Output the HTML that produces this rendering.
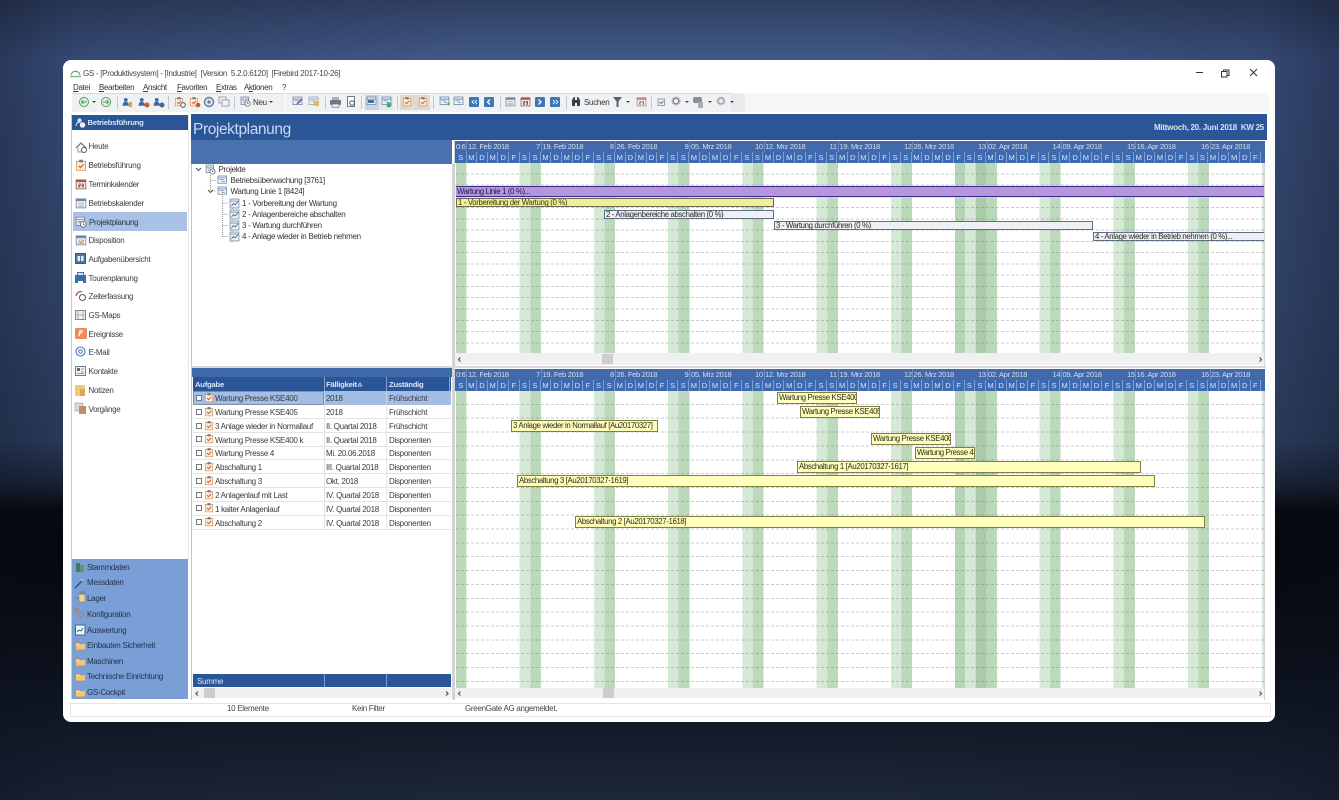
<!DOCTYPE html>
<html lang="de"><head><meta charset="utf-8"><title>GS - Projektplanung</title>
<style>
html,body{margin:0;padding:0;width:1339px;height:800px;overflow:hidden}
body{position:relative;font-family:"Liberation Sans",sans-serif;font-size:8px;letter-spacing:-.29px;color:#333;
background:linear-gradient(90deg,rgba(10,15,30,.42),rgba(10,15,30,.2) 6%,transparent 35%,transparent 65%,rgba(10,15,30,.2) 94%,rgba(10,15,30,.42)),linear-gradient(180deg,#2f3f5f 0,#41588a 60px,#3a5079 300px,#33466a 440px,#1c2738 485px,#05070a 510px,#04060a 560px,#0d131d 680px,#1c2739 800px)}
#app{position:absolute;left:0;top:0;width:1339px;height:800px;filter:blur(.3px)}
#w{position:absolute;left:63px;top:60px;width:1212px;height:662px;background:#fff;border-radius:8px}
.a{position:absolute}
.t{position:absolute;white-space:nowrap;line-height:12px;height:12px;margin-top:.7px}
.b{background:#2a5597}
.hdr{position:absolute;height:22px;left:455px;width:810px;background:#4269a9;overflow:hidden}
.hdr span{position:absolute;top:0;line-height:11px;color:#d3def0;font-size:7.6px;letter-spacing:-.33px;white-space:nowrap}
.hdr u{position:absolute;top:0;width:1px;height:11px;background:#6a8cc0}
.days{position:absolute;left:1px;top:11px;height:11px;width:809px;background:#3d6ab0;display:flex}
.days i{display:block;flex:0 0 10.607px;box-sizing:border-box;border-right:1px solid #7d9fd0;font-style:normal;text-align:center;line-height:11px;color:#d8e4f6;font-size:7.5px;letter-spacing:0}
.grid{position:absolute;left:456px;width:808px;background:repeating-linear-gradient(90deg,#bcd9bc 0 10.6px,#fff 10.6px 63.64px,#d6e8d6 63.64px 74.25px)}
.lines{position:absolute;left:0;top:0;right:0;bottom:0;-webkit-mask-image:repeating-linear-gradient(90deg,#000 0 3px,transparent 3px 5px);mask-image:repeating-linear-gradient(90deg,#000 0 3px,transparent 3px 5px)}
.e{position:absolute;width:10.6px;top:0;bottom:0}
.bar{position:absolute;box-sizing:border-box;white-space:nowrap;overflow:hidden;line-height:9px;padding-left:1px;font-size:7.8px;letter-spacing:-.35px;color:#2a2a20}
.y{background:#ffffbb;border:1px solid #7f7f45;height:12px;line-height:10px}
.g{background:#eef0f6;border:1px solid #5f6f82}
.scr{position:absolute;background:#f0f0f0}
.row{position:absolute;left:193px;width:258px;height:14px;border-bottom:1px solid #e3e3e3;box-sizing:border-box}
.row b{position:absolute;top:0;bottom:0;width:1px;background:#e3e3e3}
.cell{position:absolute;top:1px;margin-top:.5px;line-height:12px;white-space:nowrap;color:#3a3a3a}
.side{color:#3d3d3d}.low{color:#23324d}
.hb{color:#d9e5f6;font-weight:bold;font-size:7.7px;letter-spacing:-.25px}
.m{color:#333;letter-spacing:-.35px}
.sep{position:absolute;top:96px;width:1px;height:13px;background:#c4c8cf}
.ar{position:absolute;top:101px;width:0;height:0;border-left:2px solid transparent;border-right:2px solid transparent;border-top:2.5px solid #444}
</style></head><body>
<div id="app">
<div id="w"></div>

<!-- title + menu -->
<div class="t" style="left:83px;top:67px;color:#444">GS - [Produktivsystem] - [Industrie]&nbsp; [Version&nbsp; 5.2.0.6120]&nbsp; [Firebird 2017-10-26]</div>
<div class="t m" style="left:73px;top:81px"><u>D</u>atei</div>
<div class="t m" style="left:99px;top:81px"><u>B</u>earbeiten</div>
<div class="t m" style="left:143px;top:81px"><u>A</u>nsicht</div>
<div class="t m" style="left:177px;top:81px"><u>F</u>avoriten</div>
<div class="t m" style="left:216px;top:81px"><u>E</u>xtras</div>
<div class="t m" style="left:244px;top:81px">A<u>k</u>tionen</div>
<div class="t m" style="left:282px;top:81px">?</div>

<!-- toolbar -->
<div class="a" style="left:72px;top:93px;width:1197px;height:19px;background:#f5f6f7"></div>
<div class="a" style="left:72px;top:93px;width:673px;height:19px;background:#f0f1f3"></div>
<div class="a" style="left:72px;top:93px;width:213px;height:1px;background:#d5d8de"></div>
<div class="a" style="left:286px;top:93px;width:445px;height:1px;background:#d5d8de"></div>
<div class="a" style="left:285px;top:93px;width:1px;height:19px;background:#fff"></div>
<div class="a" style="left:731px;top:94px;width:14px;height:18px;background:#e9eaec"></div>
<div class="a" style="left:365px;top:95px;width:14px;height:15px;background:#cad5e4"></div>
<div class="a" style="left:379px;top:95px;width:14px;height:15px;background:#e4e8ee"></div>
<div class="a" style="left:400px;top:95px;width:30px;height:15px;background:#e0d9cf"></div>
<div class="sep" style="left:117px"></div><div class="sep" style="left:168px"></div><div class="sep" style="left:234px"></div>
<div class="sep" style="left:325px"></div><div class="sep" style="left:361px"></div><div class="sep" style="left:397px"></div><div class="sep" style="left:433px"></div><div class="sep" style="left:500px"></div><div class="sep" style="left:566px"></div><div class="sep" style="left:651px"></div>
<div class="ar" style="left:92px"></div><div class="ar" style="left:269px"></div><div class="ar" style="left:626px"></div><div class="ar" style="left:685px"></div><div class="ar" style="left:708px"></div><div class="ar" style="left:730px"></div>
<div class="t" style="left:253px;top:96px;color:#333">Neu</div>
<div class="t" style="left:584px;top:96px;color:#333">Suchen</div>

<!-- top blue header -->
<div class="a b" style="left:191px;top:114px;width:1076px;height:26px"></div>
<div class="t" style="left:193px;top:120px;height:17px;line-height:17px;font-size:15.5px;letter-spacing:-.4px;color:#c9dbf2">Projektplanung</div>
<div class="t" style="right:75px;top:121px;color:#d6e2f3;font-weight:bold;letter-spacing:-.26px">Mittwoch, 20. Juni 2018&nbsp; KW 25</div>

<!-- sidebar -->
<div class="a" style="left:71px;top:114px;width:1px;height:585px;background:#c9c9c9"></div>
<div class="a" style="left:188px;top:114px;width:1px;height:445px;background:#e6e6e6"></div>
<div class="a b" style="left:72px;top:115px;width:116px;height:15px"></div>
<div class="t hb" style="left:87.5px;top:116.5px">Betriebsführung</div>
<div class="a" style="left:73px;top:212px;width:114px;height:19px;background:#a9c1e4"></div>
<div class="t side" style="left:88.5px;top:140.5px">Heute</div>
<div class="t side" style="left:88.5px;top:159px">Betriebsführung</div>
<div class="t side" style="left:88.5px;top:178px">Terminkalender</div>
<div class="t side" style="left:88.5px;top:197px">Betriebskalender</div>
<div class="t" style="left:89px;top:216px;color:#26344c">Projektplanung</div>
<div class="t side" style="left:88.5px;top:234.5px">Disposition</div>
<div class="t side" style="left:88.5px;top:253px">Aufgabenübersicht</div>
<div class="t side" style="left:88.5px;top:272px">Tourenplanung</div>
<div class="t side" style="left:88.5px;top:290.5px">Zeiterfassung</div>
<div class="t side" style="left:88.5px;top:309px">GS-Maps</div>
<div class="t side" style="left:88.5px;top:328px">Ereignisse</div>
<div class="t side" style="left:88.5px;top:346.5px">E-Mail</div>
<div class="t side" style="left:88.5px;top:365px">Kontakte</div>
<div class="t side" style="left:88.5px;top:384px">Notizen</div>
<div class="t side" style="left:88.5px;top:403px">Vorgänge</div>

<div class="a" style="left:72px;top:559px;width:116px;height:140px;background:#7a9fd6"></div>
<div class="t low" style="left:87px;top:561px">Stammdaten</div>
<div class="t low" style="left:87px;top:576.5px">Messdaten</div>
<div class="t low" style="left:87px;top:592px">Lager</div>
<div class="t low" style="left:87px;top:608px">Konfiguration</div>
<div class="t low" style="left:87px;top:624px">Auswertung</div>
<div class="t low" style="left:87px;top:639px">Einbauten Sicherheit</div>
<div class="t low" style="left:87px;top:655px">Maschinen</div>
<div class="t low" style="left:87px;top:670.5px">Technische Einrichtung</div>
<div class="t low" style="left:87px;top:686px">GS-Cockpit</div>

<!-- project tree panel -->
<div class="a" style="left:191px;top:140px;width:261px;height:24px;background:#4a70ae"></div>
<div class="a" style="left:191px;top:164px;width:1px;height:204px;background:#c4c4c4"></div>
<div class="a" style="left:452px;top:164px;width:2px;height:204px;background:#d4d4d4"></div>
<div class="t" style="left:218.5px;top:163px">Projekte</div>
<div class="t" style="left:230.5px;top:174px">Betriebsüberwachung [3761]</div>
<div class="t" style="left:230.5px;top:185px">Wartung Linie 1 [8424]</div>
<div class="t" style="left:242px;top:197px">1 - Vorbereitung der Wartung</div>
<div class="t" style="left:242px;top:208px">2 - Anlagenbereiche abschalten</div>
<div class="t" style="left:242px;top:219px">3 - Wartung durchführen</div>
<div class="t" style="left:242px;top:230.500px">4 - Anlage wieder in Betrieb nehmen</div>

<!-- top gantt -->
<div class="a" style="left:454px;top:140px;width:812px;height:227px;background:#fff"></div>
<div class="a" style="left:454px;top:140px;width:1px;height:227px;background:#cfcfcf"></div>
<div class="hdr" style="top:141px">
<span style="left:1px">0:6</span><span style="left:13px">12. Feb 2018</span><u style="left:11px"></u>
<span style="left:81px">7</span><u style="left:86px"></u><span style="left:87.5px">19. Feb 2018</span>
<span style="left:155px">8</span><u style="left:160px"></u><span style="left:161.5px">26. Feb 2018</span>
<span style="left:229.5px">9</span><u style="left:234px"></u><span style="left:236px">05. Mrz 2018</span>
<span style="left:300px">10</span><u style="left:309px"></u><span style="left:310px">12. Mrz 2018</span>
<span style="left:374.5px">11</span><u style="left:383px"></u><span style="left:384.5px">19. Mrz 2018</span>
<span style="left:449px">12</span><u style="left:457px"></u><span style="left:458.5px">26. Mrz 2018</span>
<span style="left:523px">13</span><u style="left:532px"></u><span style="left:533px">02. Apr 2018</span>
<span style="left:597.5px">14</span><u style="left:606px"></u><span style="left:607.5px">09. Apr 2018</span>
<span style="left:672px">15</span><u style="left:680px"></u><span style="left:681.5px">16. Apr 2018</span>
<span style="left:746px">16</span><u style="left:755px"></u><span style="left:756px">23. Apr 2018</span>
<div class="days"><i>S</i><i>M</i><i>D</i><i>M</i><i>D</i><i>F</i><i>S</i><i>S</i><i>M</i><i>D</i><i>M</i><i>D</i><i>F</i><i>S</i><i>S</i><i>M</i><i>D</i><i>M</i><i>D</i><i>F</i><i>S</i><i>S</i><i>M</i><i>D</i><i>M</i><i>D</i><i>F</i><i>S</i><i>S</i><i>M</i><i>D</i><i>M</i><i>D</i><i>F</i><i>S</i><i>S</i><i>M</i><i>D</i><i>M</i><i>D</i><i>F</i><i>S</i><i>S</i><i>M</i><i>D</i><i>M</i><i>D</i><i>F</i><i>S</i><i>S</i><i>M</i><i>D</i><i>M</i><i>D</i><i>F</i><i>S</i><i>S</i><i>M</i><i>D</i><i>M</i><i>D</i><i>F</i><i>S</i><i>S</i><i>M</i><i>D</i><i>M</i><i>D</i><i>F</i><i>S</i><i>S</i><i>M</i><i>D</i><i>M</i><i>D</i><i>F</i></div>
</div>
<div class="grid" style="top:163px;height:190px">
<div class="e" style="left:498.6px;background:#b5d3b5"></div>
<div class="e" style="left:519.8px;background:#a9cba9"></div>
<div class="e" style="left:530.4px;background:#b9d8b9"></div>
<div class="lines" style="background:repeating-linear-gradient(180deg,transparent 0 10.27px,rgba(120,120,120,.38) 10.27px 11.27px)"></div>
</div>
<div class="a" style="left:455px;top:185px;width:810px;height:13px;background:#dcd2ee;opacity:.55"></div>
<div class="bar" style="left:456px;top:186px;width:809px;height:11px;background:#b596dc;border-top:1px solid #3a2a90;border-bottom:1px solid #3a2a90;color:#20163f">Wartung Linie 1 (0 %)...</div>
<div class="bar" style="left:456px;top:198px;width:318px;height:9px;background:#f0ee9a;border:1px solid #6a6a50;line-height:7px;color:#3a3a10">1 - Vorbereitung der Wartung (0 %)</div>
<div class="bar g" style="left:604px;top:210px;width:170px;height:9px;line-height:7px">2 - Anlagenbereiche abschalten (0 %)</div>
<div class="bar g" style="left:774px;top:221px;width:319px;height:9px;line-height:7px">3 - Wartung durchführen (0 %)</div>
<div class="bar g" style="left:1093px;top:232px;width:172px;height:9px;line-height:7px;border-right:0">4 - Anlage wieder in Betrieb nehmen (0 %)...</div>
<div class="a" style="left:1264px;top:163px;width:1px;height:204px;background:#d5d5d5"></div>
<div class="scr" style="left:455px;top:353px;width:809px;height:12px"></div>
<div class="a" style="left:602px;top:354px;width:11px;height:10px;background:#cdcdcd"></div>

<!-- lower left table -->
<div class="a" style="left:191px;top:366px;width:1075px;height:2px;background:#d8d8d8"></div>
<div class="a" style="left:191px;top:368px;width:1px;height:332px;background:#c4c4c4"></div>
<div class="a" style="left:452px;top:368px;width:2px;height:332px;background:#d4d4d4"></div>
<div class="a" style="left:192px;top:368px;width:260px;height:9px;background:#3f69a9"></div>
<div class="a b" style="left:193px;top:377px;width:258px;height:14px"></div>
<div class="a" style="left:324px;top:377px;width:1px;height:14px;background:#7fa0d0"></div>
<div class="a" style="left:386px;top:377px;width:1px;height:14px;background:#7fa0d0"></div>
<div class="a" style="left:449px;top:377px;width:1px;height:14px;background:#7fa0d0"></div>
<div class="t hb" style="left:195px;top:378.5px">Aufgabe</div>
<div class="t hb" style="left:326px;top:378.5px">Fälligkeit</div>
<div class="t hb" style="left:389px;top:378.5px">Zuständig</div>

<div class="row" style="top:391px;background:#a3bde4;border-bottom:0"><b style="left:131px;background:#c5d4ea"></b><b style="left:193px;background:#c5d4ea"></b><span class="cell" style="left:22px">Wartung Presse KSE400</span><span class="cell" style="left:133px">2018</span><span class="cell" style="left:196px">Frühschicht</span></div>
<div class="row" style="top:405px"><b style="left:131px"></b><b style="left:193px"></b><span class="cell" style="left:22px">Wartung Presse KSE405</span><span class="cell" style="left:133px">2018</span><span class="cell" style="left:196px">Frühschicht</span></div>
<div class="row" style="top:419px"><b style="left:131px"></b><b style="left:193px"></b><span class="cell" style="left:22px">3 Anlage wieder in Normallauf</span><span class="cell" style="left:133px">II. Quartal 2018</span><span class="cell" style="left:196px">Frühschicht</span></div>
<div class="row" style="top:433px"><b style="left:131px"></b><b style="left:193px"></b><span class="cell" style="left:22px">Wartung Presse KSE400 k</span><span class="cell" style="left:133px">II. Quartal 2018</span><span class="cell" style="left:196px">Disponenten</span></div>
<div class="row" style="top:446px"><b style="left:131px"></b><b style="left:193px"></b><span class="cell" style="left:22px">Wartung Presse 4</span><span class="cell" style="left:133px">Mi. 20.06.2018</span><span class="cell" style="left:196px">Disponenten</span></div>
<div class="row" style="top:460px"><b style="left:131px"></b><b style="left:193px"></b><span class="cell" style="left:22px">Abschaltung 1</span><span class="cell" style="left:133px">III. Quartal 2018</span><span class="cell" style="left:196px">Disponenten</span></div>
<div class="row" style="top:474px"><b style="left:131px"></b><b style="left:193px"></b><span class="cell" style="left:22px">Abschaltung 3</span><span class="cell" style="left:133px">Okt. 2018</span><span class="cell" style="left:196px">Disponenten</span></div>
<div class="row" style="top:488px"><b style="left:131px"></b><b style="left:193px"></b><span class="cell" style="left:22px">2 Anlagenlauf mit Last</span><span class="cell" style="left:133px">IV. Quartal 2018</span><span class="cell" style="left:196px">Disponenten</span></div>
<div class="row" style="top:502px"><b style="left:131px"></b><b style="left:193px"></b><span class="cell" style="left:22px">1 kalter Anlagenlauf</span><span class="cell" style="left:133px">IV. Quartal 2018</span><span class="cell" style="left:196px">Disponenten</span></div>
<div class="row" style="top:516px"><b style="left:131px"></b><b style="left:193px"></b><span class="cell" style="left:22px">Abschaltung 2</span><span class="cell" style="left:133px">IV. Quartal 2018</span><span class="cell" style="left:196px">Disponenten</span></div>

<div class="a b" style="left:193px;top:674px;width:258px;height:13px"></div>
<div class="a" style="left:324px;top:674px;width:1px;height:13px;background:#7fa0d0"></div>
<div class="a" style="left:386px;top:674px;width:1px;height:13px;background:#7fa0d0"></div>
<div class="t" style="left:197px;top:675px;color:#d9e5f6">Summe</div>
<div class="scr" style="left:193px;top:688px;width:258px;height:10px"></div>
<div class="a" style="left:204px;top:688px;width:11px;height:10px;background:#cdcdcd"></div>

<!-- lower gantt -->
<div class="a" style="left:454px;top:368px;width:1px;height:332px;background:#cfcfcf"></div>
<div class="hdr" style="top:369px">
<span style="left:1px">0:6</span><span style="left:13px">12. Feb 2018</span><u style="left:11px"></u>
<span style="left:81px">7</span><u style="left:86px"></u><span style="left:87.5px">19. Feb 2018</span>
<span style="left:155px">8</span><u style="left:160px"></u><span style="left:161.5px">26. Feb 2018</span>
<span style="left:229.5px">9</span><u style="left:234px"></u><span style="left:236px">05. Mrz 2018</span>
<span style="left:300px">10</span><u style="left:309px"></u><span style="left:310px">12. Mrz 2018</span>
<span style="left:374.5px">11</span><u style="left:383px"></u><span style="left:384.5px">19. Mrz 2018</span>
<span style="left:449px">12</span><u style="left:457px"></u><span style="left:458.5px">26. Mrz 2018</span>
<span style="left:523px">13</span><u style="left:532px"></u><span style="left:533px">02. Apr 2018</span>
<span style="left:597.5px">14</span><u style="left:606px"></u><span style="left:607.5px">09. Apr 2018</span>
<span style="left:672px">15</span><u style="left:680px"></u><span style="left:681.5px">16. Apr 2018</span>
<span style="left:746px">16</span><u style="left:755px"></u><span style="left:756px">23. Apr 2018</span>
<div class="days"><i>S</i><i>M</i><i>D</i><i>M</i><i>D</i><i>F</i><i>S</i><i>S</i><i>M</i><i>D</i><i>M</i><i>D</i><i>F</i><i>S</i><i>S</i><i>M</i><i>D</i><i>M</i><i>D</i><i>F</i><i>S</i><i>S</i><i>M</i><i>D</i><i>M</i><i>D</i><i>F</i><i>S</i><i>S</i><i>M</i><i>D</i><i>M</i><i>D</i><i>F</i><i>S</i><i>S</i><i>M</i><i>D</i><i>M</i><i>D</i><i>F</i><i>S</i><i>S</i><i>M</i><i>D</i><i>M</i><i>D</i><i>F</i><i>S</i><i>S</i><i>M</i><i>D</i><i>M</i><i>D</i><i>F</i><i>S</i><i>S</i><i>M</i><i>D</i><i>M</i><i>D</i><i>F</i><i>S</i><i>S</i><i>M</i><i>D</i><i>M</i><i>D</i><i>F</i><i>S</i><i>S</i><i>M</i><i>D</i><i>M</i><i>D</i><i>F</i></div>
</div>
<div class="grid" style="top:391px;height:297px">
<div class="e" style="left:498.6px;background:#b5d3b5"></div>
<div class="e" style="left:519.8px;background:#a9cba9"></div>
<div class="e" style="left:530.4px;background:#b9d8b9"></div>
<div class="lines" style="background:repeating-linear-gradient(180deg,transparent 0 12.85px,rgba(120,120,120,.38) 12.85px 13.85px)"></div>
</div>
<div class="bar y" style="left:777px;top:392px;width:80px">Wartung Presse KSE400</div>
<div class="bar y" style="left:800px;top:406px;width:80px">Wartung Presse KSE405</div>
<div class="bar y" style="left:511px;top:420px;width:147px">3 Anlage wieder in Normallauf [Au20170327]</div>
<div class="bar y" style="left:871px;top:433px;width:80px">Wartung Presse KSE400</div>
<div class="bar y" style="left:915px;top:447px;width:60px">Wartung Presse 4</div>
<div class="bar y" style="left:797px;top:461px;width:344px">Abschaltung 1 [Au20170327-1617]</div>
<div class="bar y" style="left:517px;top:475px;width:638px">Abschaltung 3 [Au20170327-1619]</div>
<div class="bar y" style="left:575px;top:516px;width:630px">Abschaltung 2 [Au20170327-1618]</div>
<div class="a" style="left:1264px;top:391px;width:1px;height:309px;background:#d5d5d5"></div>
<div class="scr" style="left:455px;top:688px;width:809px;height:10px"></div>
<div class="a" style="left:603px;top:688px;width:11px;height:10px;background:#cdcdcd"></div>

<!-- status bar -->
<div class="a" style="left:70px;top:703px;width:1199px;height:12px;border:1px solid #e4e4e4;box-sizing:content-box"></div>
<div class="t" style="left:227px;top:702.5px;color:#444">10 Elemente</div>
<div class="t" style="left:352px;top:702.5px;color:#444">Kein Filter</div>
<div class="t" style="left:465px;top:702.5px;color:#444">GreenGate AG angemeldet.</div>

<!-- icons -->
<svg class="a" style="left:0;top:0;pointer-events:none" width="1339" height="800" viewBox="0 0 1339 800" xmlns="http://www.w3.org/2000/svg" fill="none">
<defs>
<symbol id="clip" viewBox="0 0 16 16"><rect x="2" y="3" width="12" height="12" fill="#fbeedd" stroke="#c98a4a"/><rect x="5.5" y="1" width="5" height="3.5" fill="#777"/><path d="M5 9l2.300 2.500L11.500 7" stroke="#d9542b" stroke-width="1.600"/></symbol>
<symbol id="cal" viewBox="0 0 16 16"><rect x="1.500" y="2.500" width="13" height="12" fill="#f4f4f4" stroke="#6b7a8a"/><rect x="1.500" y="2.500" width="13" height="3" fill="#6b87a8"/><path d="M4 8h8M4 10.500h8M4 12.500h8" stroke="#a0aab5"/></symbol>
<symbol id="calr" viewBox="0 0 16 16"><rect x="1.500" y="2.500" width="13" height="12" fill="#f4eee8" stroke="#84502f"/><rect x="1.500" y="2.500" width="13" height="3" fill="#b5533c"/><path d="M5 8h2v2H5v2h2M9 8h2v2H9M9 10h2v2H9" stroke="#333"/></symbol>
<symbol id="proj" viewBox="0 0 16 16"><rect x="1.500" y="1.500" width="11" height="11" fill="#e6edf5" stroke="#6d7d90"/><path d="M1.500 4.500h11M4 7h5M4 9h3" stroke="#6d8fb5"/><circle cx="11" cy="11" r="3.800" fill="#fff" stroke="#555"/><path d="M11 9v2.200h1.800" stroke="#555"/></symbol>
<symbol id="task" viewBox="0 0 16 16"><rect x="1.500" y="1.500" width="13" height="11" fill="#eef3f8" stroke="#5c7790"/><path d="M1.500 4.500h13M4 7h6M7 9.500h5" stroke="#4a7ab0"/></symbol>
<symbol id="gan" viewBox="0 0 16 16"><rect x="1.500" y="1.500" width="13" height="13" fill="#eef3f8" stroke="#5c7790"/><path d="M1.500 4.500h13" stroke="#5c7790"/><path d="M3.500 12l3-4 2.500 2 4-4.500" stroke="#3d6590" stroke-width="1.200"/><path d="M3 15h3" stroke="#d79a4c" stroke-width="1.500"/></symbol>
<symbol id="users" viewBox="0 0 16 16"><circle cx="6" cy="4.500" r="3" fill="#3d6a9a"/><path d="M1 14c0-5 2-6.500 5-6.500S11 9 11 14z" fill="#3d6a9a"/></symbol>
<symbol id="folder" viewBox="0 0 16 16"><path d="M1 4h5l1.500 2H15v8.500H1z" fill="#f0c67c" stroke="#b8935a"/><path d="M1 7h14" stroke="#fbe3b3"/></symbol>
<symbol id="gear" viewBox="0 0 16 16"><circle cx="8" cy="8" r="4.500" fill="none" stroke="#8a8f96" stroke-width="2.400"/><circle cx="8" cy="8" r="6.500" fill="none" stroke="#8a8f96" stroke-width="1.300" stroke-dasharray="2 1.800"/></symbol>
<symbol id="blue" viewBox="0 0 16 16"><rect width="16" height="16" rx="2" fill="#3c78b8"/></symbol>
</defs>

<!-- window chrome -->
<path d="M71 75c1-5 8-5 9 0" stroke="#5aa86a" stroke-width="1.200"/><path d="M70 76.500h11" stroke="#7fbf8d" stroke-width="1.500"/>
<path d="M1196 72.500h7" stroke="#333"/>
<rect x="1221.500" y="71.500" width="5.500" height="5.500" stroke="#333"/><path d="M1223.500 71.500v-1.500h5.500v5.500h-2" stroke="#333"/>
<path d="M1250 69l7 7M1257 69l-7 7" stroke="#333"/>

<!-- toolbar icons -->
<circle cx="84" cy="102" r="4.500" fill="#e7f3e7" stroke="#4f9a68"/><path d="M87 102h-5.500M83.500 100l-2 2 2 2" stroke="#4f9a68"/>
<circle cx="106" cy="102" r="4.500" fill="#e7f3e7" stroke="#4f9a68"/><path d="M103 102h5.500M106.500 100l2 2-2 2" stroke="#4f9a68"/>
<use href="#users" x="122" y="97" width="10" height="10"/><rect x="129" y="102" width="3" height="5" fill="#e0a63e"/>
<use href="#users" x="138" y="97" width="10" height="10"/><circle cx="147" cy="105" r="2.500" fill="#d9542b"/>
<use href="#users" x="153" y="97" width="10" height="10"/><circle cx="162" cy="105" r="2.500" fill="#3d6a9a"/>
<use href="#clip" x="174" y="96" width="10" height="11"/><circle cx="183" cy="105" r="2.300" fill="#fff" stroke="#556"/>
<use href="#clip" x="189" y="96" width="10" height="11"/><circle cx="198" cy="105" r="2.300" fill="#d9542b"/>
<circle cx="209" cy="102" r="4.500" fill="#dfe8f0" stroke="#5d7d9d" stroke-width="1.400"/><circle cx="209" cy="102" r="1.600" fill="#5d7d9d"/>
<rect x="219" y="97" width="7" height="6" fill="#f4f4f4" stroke="#9aa0a8"/><rect x="222" y="100" width="7" height="6" fill="#f4f4f4" stroke="#9aa0a8"/>
<use href="#proj" x="240" y="96" width="11" height="11"/>
<use href="#task" x="292" y="96" width="11" height="11"/><path d="M297 104l5-5" stroke="#8a4a9a" stroke-width="1.400"/>
<use href="#task" x="308" y="96" width="11" height="11" opacity=".7"/><rect x="314" y="101" width="5" height="5" fill="#ecb46a"/>
<rect x="330" y="100" width="11" height="5" rx="1" fill="#6a7684"/><rect x="332" y="97" width="7" height="3" fill="#a9b2bd"/><rect x="332" y="104" width="7" height="3.500" fill="#e4e8ec" stroke="#6a7684" stroke-width=".6"/>
<rect x="347.500" y="96.500" width="7" height="10" fill="#fff" stroke="#6d7d90"/><circle cx="352" cy="103" r="2.300" fill="#fff" stroke="#4a5a6d"/>
<use href="#task" x="366" y="96" width="11" height="11"/><rect x="368" y="100" width="6" height="3" fill="#3f6f9a"/>
<use href="#task" x="381" y="96" width="11" height="11"/><circle cx="389" cy="105" r="2.500" fill="#4aa866"/>
<use href="#clip" x="402" y="96" width="10" height="11"/><use href="#clip" x="418" y="96" width="10" height="11"/>
<use href="#task" x="439" y="96" width="11" height="11"/><path d="M447 104h3M448.500 102.500v3" stroke="#4aa866"/>
<use href="#task" x="453" y="96" width="11" height="11"/>
<use href="#blue" x="469" y="97" width="10" height="10"/><path d="M474 100l-2 2 2 2M477 100l-2 2 2 2" stroke="#dfeaf6"/>
<use href="#blue" x="484" y="97" width="10" height="10"/><path d="M490 99.500l-2.500 2.500 2.500 2.500" stroke="#fff" stroke-width="1.300"/>
<use href="#cal" x="505" y="96" width="11" height="11"/>
<use href="#calr" x="520" y="96" width="11" height="11"/>
<use href="#blue" x="535" y="97" width="10" height="10"/><path d="M538.500 99.500l2.500 2.500-2.500 2.500" stroke="#fff" stroke-width="1.300"/>
<use href="#blue" x="550" y="97" width="10" height="10"/><path d="M553 100l2 2-2 2M556 100l2 2-2 2" stroke="#dfeaf6"/>
<path d="M572 106v-6l2-3h1v9zM577 106v-9h1l2 3v6zM575 100h2v3h-2z" fill="#37404a"/>
<path d="M613 97h9l-3.500 4.500v5.500h-2v-5.500z" fill="#596570"/>
<use href="#calr" x="636" y="96" width="11" height="11" opacity=".7"/>
<rect x="658" y="99" width="6.500" height="6.500" stroke="#9aa0a8"/><path d="M659.500 102l1.500 1.500 2.500-2.500" stroke="#6a7684"/>
<use href="#gear" x="671" y="96" width="10" height="10"/>
<rect x="693" y="97" width="9" height="6" rx="2" fill="#8a9096"/><rect x="698" y="102" width="5" height="6" fill="#a8adb3"/>
<use href="#gear" x="716" y="96" width="10" height="10" opacity=".75"/>

<!-- sidebar icons -->
<g transform="translate(75 117)"><circle cx="4.500" cy="3.500" r="2.200" fill="#d5e2f2"/><circle cx="7.500" cy="8" r="2.400" fill="#e6eef8" stroke="#fff" stroke-width=".6"/><path d="M1 9c0-3 1.500-3.500 3-3.500" stroke="#dfe8f3"/></g>
<g transform="translate(75 141)"><path d="M1 7L6 2l5 5" stroke="#6d7d90" stroke-width="1.300"/><path d="M3 7v4h6V7" stroke="#8d9aa8"/><circle cx="9" cy="9" r="2.500" fill="#fff" stroke="#556"/></g>
<use href="#clip" x="75" y="159" width="12" height="12"/>
<use href="#calr" x="75" y="178" width="12" height="12"/>
<use href="#cal" x="75" y="197" width="12" height="12"/>
<use href="#proj" x="75" y="216" width="12" height="12"/>
<use href="#cal" x="75" y="234" width="12" height="12"/><path d="M79 241l2 2 3-3" stroke="#e09a4e"/>
<rect x="75.500" y="253.500" width="10" height="10" fill="#4c78a8" stroke="#345a86"/><rect x="77.500" y="256" width="2.500" height="5" fill="#e6eef6"/><rect x="81" y="256" width="2.500" height="5" fill="#e6eef6"/>
<path d="M77 272h7v3h2v8h-3v-2h-5v2h-3v-8h2z" fill="#3c6ea8"/><rect x="78" y="273" width="5" height="2" fill="#dfe8f3"/>
<path d="M76 296c1-4 4-5 6-4" stroke="#b9573c" stroke-width="1.300"/><circle cx="82.500" cy="297.500" r="3" fill="#fff" stroke="#556"/>
<rect x="75.500" y="310.500" width="10" height="9" fill="#eef1f4" stroke="#7a8794"/><path d="M78 310.500v9M83 310.500v9M75.500 315h10" stroke="#a5b0bb"/>
<rect x="75" y="328" width="12" height="11" rx="1" fill="#ec8c5f"/><path d="M79 336l1-5h3M79.500 333h2.500" stroke="#fff" stroke-width="1.200"/>
<circle cx="80.500" cy="351.500" r="4.500" stroke="#3d7ab8" stroke-width="1.100"/><circle cx="80.500" cy="351.500" r="1.800" stroke="#3d7ab8"/>
<rect x="75.500" y="366.500" width="10" height="9" fill="#f4f5f7" stroke="#6d7a88"/><rect x="77" y="368" width="3" height="3" fill="#5d6a78"/><path d="M81 369h3M81 372h3M77 373.500h7" stroke="#8d9aa8"/>
<rect x="75" y="385" width="10" height="11" fill="#efc878"/><rect x="80" y="389" width="5" height="7" fill="#d8a85a"/>
<rect x="75" y="403" width="8" height="8" fill="#d8d8dc" stroke="#8f96a0" stroke-width=".6"/><rect x="79" y="406" width="7" height="8" fill="#b89070"/>
<!-- lower sidebar -->
<g><rect x="76" y="563" width="4" height="9" fill="#3f7d5f"/><rect x="80" y="565" width="4" height="7" fill="#5a9a6a"/></g>
<path d="M75 588l4-4M79 584l4-4" stroke="#334f78" stroke-width="1.500"/><path d="M81 579l2 2" stroke="#a0c0e0" stroke-width="1.800"/>
<rect x="79" y="594" width="6" height="8" fill="#e9d79e" stroke="#8c8050" stroke-width=".6"/><path d="M75 598h4" stroke="#7a7a5a"/><rect x="80" y="592" width="4" height="2" stroke="#5d6a78" stroke-width=".7"/>
<use href="#gear" x="77" y="611" width="8" height="8"/><circle cx="76.500" cy="610.500" r="2" stroke="#b07a50" stroke-width=".8"/>
<rect x="75.500" y="625" width="9.500" height="10" fill="#f2f6fb" stroke="#3d6a9a"/><path d="M77 632l2-2 2 1 2-3" stroke="#3d6a9a"/>
<use href="#folder" x="75" y="640" width="11" height="11"/><use href="#folder" x="75" y="656" width="11" height="11"/><use href="#folder" x="75" y="671" width="11" height="11"/><use href="#folder" x="75" y="687" width="11" height="11"/>

<!-- tree -->
<path d="M196 168l2.500 2.500 2.500-2.500M208 190l2.500 2.500 2.500-2.500" stroke="#555"/>
<use href="#proj" x="205" y="164" width="11" height="11"/>
<path d="M210.500 175v15M210.500 180.500h6M210.500 191h6" stroke="#999" stroke-dasharray="1 1"/>
<path d="M222.500 196v41M222.500 203h5M222.500 214.500h5M222.500 225.500h5M222.500 236.500h5" stroke="#999" stroke-dasharray="1 1"/>
<use href="#task" x="217" y="175" width="10.500" height="10.500"/>
<use href="#task" x="217" y="186" width="10.500" height="10.500"/>
<use href="#gan" x="229" y="198" width="11" height="11"/>
<use href="#gan" x="229" y="209" width="11" height="11"/>
<use href="#gan" x="229" y="220" width="11" height="11"/>
<use href="#gan" x="229" y="231" width="11" height="11"/>

<!-- sort glyph -->
<path d="M358 386l2-3 2 3h-4" stroke="#d9e5f6" stroke-width=".7"/>
<!-- table row icons -->
<g stroke="#777" fill="#fff"><rect x="196.500" y="395.500" width="5" height="5"/><rect x="196.500" y="409.500" width="5" height="5"/><rect x="196.500" y="423.500" width="5" height="5"/><rect x="196.500" y="436.500" width="5" height="5"/><rect x="196.500" y="450.500" width="5" height="5"/><rect x="196.500" y="464.500" width="5" height="5"/><rect x="196.500" y="478.500" width="5" height="5"/><rect x="196.500" y="492.500" width="5" height="5"/><rect x="196.500" y="505.500" width="5" height="5"/><rect x="196.500" y="519.500" width="5" height="5"/></g>
<use href="#clip" x="204" y="392" width="10" height="11"/><use href="#clip" x="204" y="406" width="10" height="11"/><use href="#clip" x="204" y="420" width="10" height="11"/><use href="#clip" x="204" y="433" width="10" height="11"/><use href="#clip" x="204" y="447" width="10" height="11"/><use href="#clip" x="204" y="461" width="10" height="11"/><use href="#clip" x="204" y="475" width="10" height="11"/><use href="#clip" x="204" y="489" width="10" height="11"/><use href="#clip" x="204" y="502" width="10" height="11"/><use href="#clip" x="204" y="516" width="10" height="11"/>
<rect x="193.500" y="391.500" width="130" height="13" stroke="#54606e" stroke-dasharray="1 1"/>

<!-- scrollbar arrows -->
<path d="M460.500 357.500l-2 2 2 2M1259.500 357.500l2 2-2 2M198 691.500l-2 2 2 2M446 691.500l2 2-2 2M460.500 691.500l-2 2 2 2M1259.500 691.500l2 2-2 2" stroke="#555" stroke-width="1.200"/>
</svg>
</div>
</body></html>
